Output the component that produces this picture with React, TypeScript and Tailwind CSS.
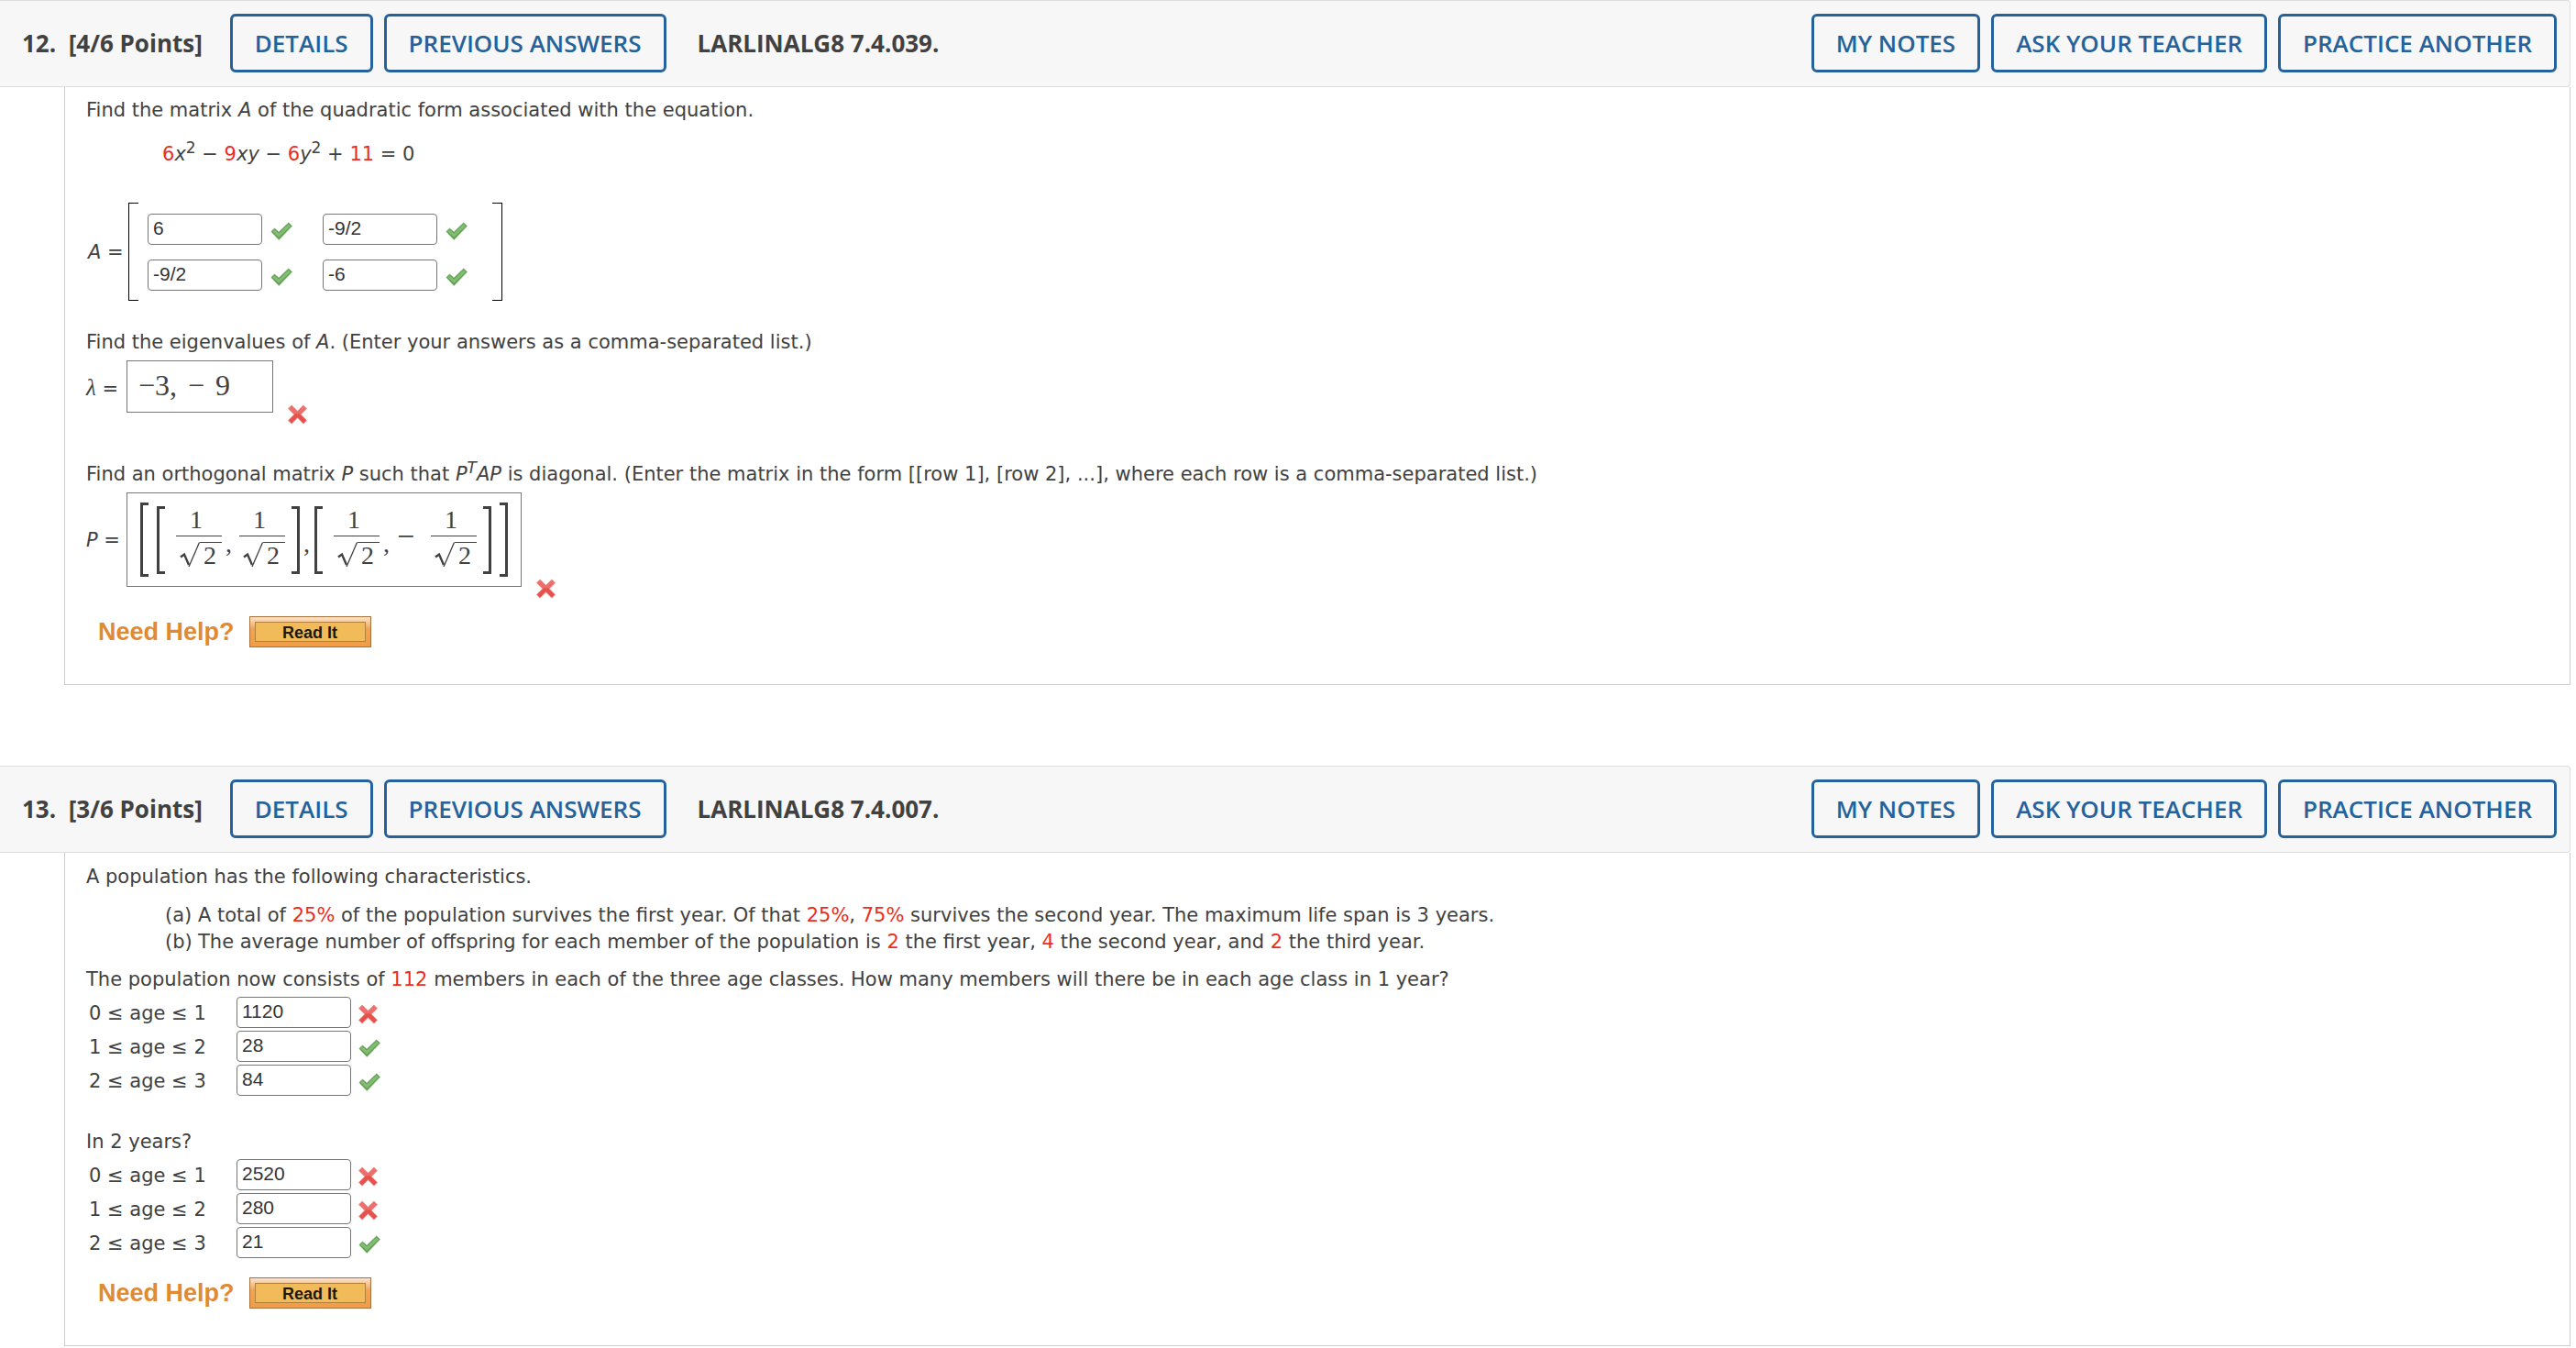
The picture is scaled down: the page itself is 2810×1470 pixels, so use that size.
import React, { type ReactNode } from 'react';

function HeaderButton({ children }: { children: ReactNode }) {
  return (
    <button
      type="button"
      className="h-16 shrink-0 rounded-md border-[3px] border-[#25629b] px-6 text-[26px] font-semibold whitespace-nowrap text-[#25629b]"
    >
      {children}
    </button>
  );
}

function QuestionHeader({ number, points, code }: { number: string; points: string; code: string }) {
  return (
    <header className="flex h-[95px] items-center justify-between rounded-r-sm border border-l-0 border-[#dddddd] bg-[#f7f7f7] pr-3.5 pb-px pl-6 font-['Open_Sans',sans-serif] text-[26px] text-[#414141]">
      <div className="flex items-center gap-3">
        <h2 className="mr-[18px] font-bold whitespace-pre">{number}&nbsp; [{points} Points]</h2>
        <HeaderButton>DETAILS</HeaderButton>
        <HeaderButton>PREVIOUS ANSWERS</HeaderButton>
        <span className="ml-[22px] font-bold">{code}</span>
      </div>
      <div className="flex items-center gap-3">
        <HeaderButton>MY NOTES</HeaderButton>
        <HeaderButton>ASK YOUR TEACHER</HeaderButton>
        <HeaderButton>PRACTICE ANOTHER</HeaderButton>
      </div>
    </header>
  );
}

function Mark({ ok }: { ok: boolean }) {
  return ok ? (
    <svg viewBox="0 0 24 20" className="h-5 w-6 shrink-0" role="img" aria-label="Correct">
      <path d="M.8 10.500 4.500 7 9.200 11 19.800 .8 23.600 4.600 9.200 19.500Z" fill="#5c974f" stroke="#8fc283" strokeWidth=".8" strokeLinejoin="round" />
      <path d="M2.200 10.600 4.600 8.400 9.300 12.600 19.800 2.300 22.200 4.600 9.200 16.900Z" fill="#82bd72" />
    </svg>
  ) : (
    <svg viewBox="0 0 24 20" className="h-5 w-6 shrink-0 overflow-visible" role="img" aria-label="Incorrect">
      <path d="M2 1.500 19 18.500M19 1.500 2 18.500" fill="none" stroke="#f29c99" strokeWidth="6" />
      <path d="M2.500 2 18.500 18M18.500 2 2.500 18" fill="none" stroke="#ec6f6c" strokeWidth="4.600" />
      <path d="M10.500 10 18.500 18M10.500 10 2.500 18" fill="none" stroke="#e5524e" strokeWidth="4" />
    </svg>
  );
}

function Answer({ value, label, id }: { value: string; label?: string; id?: string }) {
  return (
    <input
      id={id}
      type="text"
      defaultValue={value}
      aria-label={label}
      className="h-[34px] w-[125px] rounded-[4px] border border-[#767676] bg-white pb-0.5 pl-[5px] font-['Liberation_Sans',Arial,sans-serif] text-[21px] text-[#333333]"
    />
  );
}

function Red({ children }: { children: ReactNode }) {
  return <span className="text-[#ec2d20]">{children}</span>;
}

function Sup({ children }: { children: ReactNode }) {
  return <sup className="text-[17px]">{children}</sup>;
}

function NeedHelp() {
  return (
    <div className="flex items-center gap-4 pl-[13px] font-['Liberation_Sans',Arial,sans-serif]">
      <span className="text-[27px] leading-[34px] font-bold text-[#e08a33]">Need Help?</span>
      <button type="button" className="h-[34px] w-[133px] border border-[#a9713a] bg-linear-to-b from-[#fbe3cc] via-[#f0a553] via-40% to-[#f09c48] p-[5px]">
        <span className="flex h-full items-center justify-center border border-[#b0803c] bg-[#f2bb5a] pt-0.5 text-[18px] font-bold text-[#1f1808]">Read It</span>
      </button>
    </div>
  );
}

function Bracket({ side, outer }: { side: 'left' | 'right'; outer?: boolean }) {
  return (
    <span
      className={`w-[9px] shrink-0 border-y-[3px] border-[#414141] ${outer ? 'h-[81px]' : 'h-[74px]'} ${side === 'left' ? 'border-l-[3px]' : 'border-r-[3px]'}`}
    />
  );
}

function Fraction() {
  return (
    <span className="flex w-[50px] shrink-0 flex-col">
      <span className="h-[33px] pr-1.5 text-center leading-8">1</span>
      <span className="flex h-[42px] w-full justify-end border-t border-[#414141] pt-1.5">
        <svg viewBox="0 0 22 28" className="h-7 w-[22px]" aria-hidden="true">
          <path d="M1 16.500 5 13.500 10 25" fill="none" stroke="#414141" strokeWidth="2.400" />
          <path d="M10 27 21.500 .5" fill="none" stroke="#414141" strokeWidth="1.300" />
        </svg>
        <span className="h-7 w-6 border-t border-[#414141] pl-1 leading-7">2</span>
      </span>
    </span>
  );
}

function AgeRows({ prefix, values }: { prefix: string; values: [string, boolean][] }) {
  return (
    <div className="mt-1 flex flex-col gap-[3px] pl-[3px]">
      {values.map(([value, ok], i) => (
        <div key={i} className="flex items-center">
          <label htmlFor={`${prefix}-${i}`} className="w-[161px] pt-0.5">
            {i} ≤ age ≤ {i + 1}
          </label>
          <Answer id={`${prefix}-${i}`} value={value} />
          <span className="pt-1 pl-2">
            <Mark ok={ok} />
          </span>
        </div>
      ))}
    </div>
  );
}

const matrix = [
  ['6', '-9/2'],
  ['-9/2', '-6'],
];

export default function App() {
  return (
    <main className="bg-white pr-1.5 font-['Verdana','DejaVu_Sans',sans-serif] text-[21px] leading-[29px] text-[#414141]">
      <section className="mb-[88px]">
        <QuestionHeader number="12." points="4/6" code="LARLINALG8 7.4.039." />
        <div className="ml-[70px] border border-t-0 border-[#cccccc] pt-[11px] pb-10 pl-[23px]">
          <p>Find the matrix <i>A</i> of the quadratic form associated with the equation.</p>
          <p className="mt-[19px] pl-[83px]">
            <Red>6</Red><i>x</i><Sup>2</Sup> − <Red>9</Red><i>xy</i> − <Red>6</Red><i>y</i><Sup>2</Sup> + <Red>11</Red> = 0
          </p>
          <div className="mt-[38px] flex h-[107px] items-center pl-0.5">
            <span className="w-11 pt-0.5"><i>A</i> =</span>
            <span className="h-full w-[11px] border-y border-l border-black" />
            <div className="grid grid-cols-2 gap-x-[33px] gap-y-4 pr-[27px] pl-2.5">
              {matrix.flatMap((row, r) =>
                row.map((value, c) => (
                  <div key={`${r}${c}`} className="flex items-center gap-[9px]">
                    <Answer value={value} label={`Row ${r + 1}, column ${c + 1}`} />
                    <span className="pt-1"><Mark ok /></span>
                  </div>
                )),
              )}
            </div>
            <span className="h-full w-[11px] border-y border-r border-black" />
          </div>
          <p className="mt-[31px]">Find the eigenvalues of <i>A</i>. (Enter your answers as a comma-separated list.)</p>
          <div className="mt-[5px] flex items-center">
            <span className="w-11 pt-1"><i className="font-['Liberation_Serif',serif] text-[25px]">λ</i> =</span>
            <span className="flex h-[57px] w-[160px] items-center border border-[#767676] pb-0.5 pl-3 font-['Liberation_Serif',serif] text-[32px]">
              −3,<span className="px-3">−</span>9
            </span>
            <span className="-mb-3 self-end pl-4"><Mark ok={false} /></span>
          </div>
          <p className="mt-[53px]">
            Find an orthogonal matrix <i>P</i> such that <i>P</i><Sup><i>T</i></Sup><i>AP</i> is diagonal. (Enter the matrix in the form [[row 1], [row 2], ...], where each row is a comma-separated list.)
          </p>
          <div className="mt-[5px] flex items-center">
            <span className="w-11 pt-0.5"><i>P</i> =</span>
            <span className="flex h-[103px] items-center border border-[#767676] px-3.5 font-['Liberation_Serif',serif] text-[28px]">
              <Bracket side="left" outer />
              <span className="w-[9px]" />
              <Bracket side="left" />
              <span className="w-3" />
              <Fraction />
              <span className="w-[19px] pt-2 pl-1">,</span>
              <Fraction />
              <span className="w-[7px]" />
              <Bracket side="right" />
              <span className="w-4 pt-2 pl-1">,</span>
              <Bracket side="left" />
              <span className="w-3" />
              <Fraction />
              <span className="w-[19px] pt-2 pl-1">,</span>
              <span className="w-[37px] pb-2 text-[34px]">−</span>
              <Fraction />
              <span className="w-[7px]" />
              <Bracket side="right" />
              <span className="w-[9px]" />
              <Bracket side="right" outer />
            </span>
            <span className="-mb-3 self-end pl-4"><Mark ok={false} /></span>
          </div>
          <div className="mt-8"><NeedHelp /></div>
        </div>
      </section>

      <section>
        <QuestionHeader number="13." points="3/6" code="LARLINALG8 7.4.007." />
        <div className="ml-[70px] border border-t-0 border-[#cccccc] pt-3 pb-10 pl-[23px]">
          <p>A population has the following characteristics.</p>
          <ol className="mt-[13px] pl-[86px]">
            <li className="flex gap-1"><span className="w-8">(a)</span><span>A total of <Red>25%</Red> of the population survives the first year. Of that <Red>25%</Red>, <Red>75%</Red> survives the second year. The maximum life span is 3 years.</span></li>
            <li className="flex gap-1"><span className="w-8">(b)</span><span>The average number of offspring for each member of the population is <Red>2</Red> the first year, <Red>4</Red> the second year, and <Red>2</Red> the third year.</span></li>
          </ol>
          <p className="mt-3">The population now consists of <Red>112</Red> members in each of the three age classes. How many members will there be in each age class in 1 year?</p>
          <AgeRows prefix="year1" values={[['1120', false], ['28', true], ['84', true]]} />
          <p className="mt-9">In 2 years?</p>
          <AgeRows prefix="year2" values={[['2520', false], ['280', false], ['21', true]]} />
          <div className="mt-[21px]"><NeedHelp /></div>
        </div>
      </section>
    </main>
  );
}
